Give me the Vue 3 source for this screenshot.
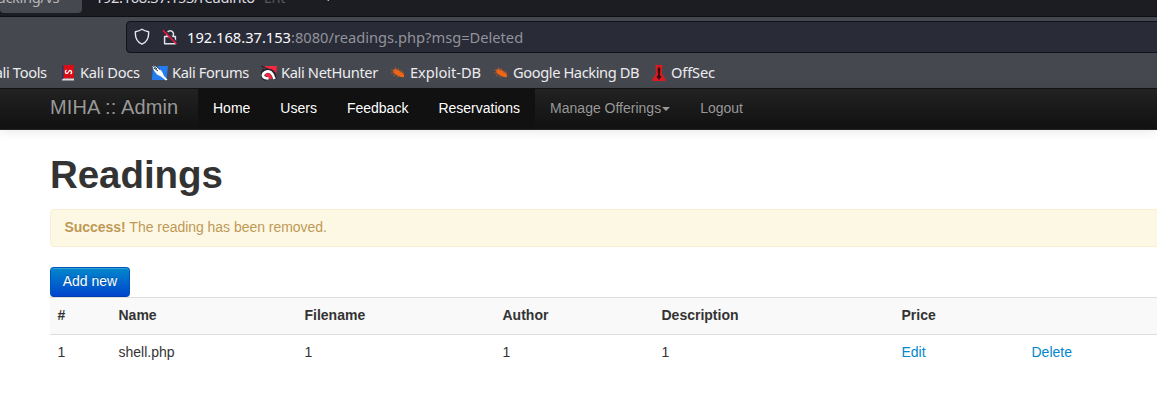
<script setup>
const navItems = [
  { label: 'Home', active: true },
  { label: 'Users', active: true },
  { label: 'Feedback', active: true },
  { label: 'Reservations', active: true },
  { label: 'Manage Offerings', caret: true },
  { label: 'Logout' },
]
</script>

<template>
  <div class="screen">
    <div class="tabs">
      <div class="tab current"><span>Hacking/vs</span></div>
      <div class="tab other"><span>192.168.37.153/readinto</span><span class="fade">Ent</span></div>
      <span class="plus">+</span>
    </div>
    <div class="toolbar">
      <div class="address">
        <svg class="shield" width="16" height="18" viewBox="0 0 16 18">
          <path d="M8 1.3 C6 2.7 3.8 3.4 1.4 3.8 C1 9.4 2.8 14 8 16.2 C13.2 14 15 9.4 14.6 3.8 C12.2 3.4 10 2.7 8 1.3Z" fill="none" stroke="#e8e8ee" stroke-width="1.4" stroke-linejoin="round" />
        </svg>
        <svg class="lock" width="16" height="18" viewBox="0 0 16 18">
          <path d="M5 8 V5 A3.4 3.4 0 0 1 11.4 5 V8 M2.6 8.5 H13.4 V15.8 H2.6Z" fill="none" stroke="#e1e1e7" stroke-width="1.5" stroke-linejoin="round" />
          <path d="M2.2 1.6 L15.2 14.8" stroke="#292b37" stroke-width="1.5" />
          <path d="M1 2.4 L14.5 16" stroke="#e8143c" stroke-width="1.5" />
        </svg>
        <span class="url"><b>192.168.37.153</b>:8080/readings.php?msg=Deleted</span>
      </div>
    </div>
    <div class="bookmarks">
      <div class="mark tools"><span>Kali Tools</span></div>
      <div class="mark docs">
        <svg width="16" height="16" viewBox="0 0 16 16">
          <path d="M2 1 L4 0 V13 L2 15Z" fill="#123c70" />
          <path d="M3.5 0 H14 V13.5 H3.5Z" fill="#d90d18" />
          <path d="M2 14.5 L3.5 13.5 H14 V15.5 H2Z" fill="#e2dada" />
          <path d="M6.6 5 Q4.6 6.2 5.8 8 Q7.4 9.2 8.4 7 Q9.4 4.6 11.2 6 Q12.3 7.7 10.6 9" fill="none" stroke="#fff" stroke-width="1.3" />
        </svg><span>Kali Docs</span>
      </div>
      <div class="mark forums">
        <svg width="16" height="16" viewBox="0 0 16 16">
          <path d="M1 1 H16 L14.5 15 H0Z" fill="#247df0" />
          <path d="M0 0 L6 2.5 L10 6.5 L12 11 L15.5 14.5 L14 15.5 L9 11.5 L5 9.5 L2 5.5Z" fill="#fff" />
          <path d="M0 0 L5 4 M2 3 L6 6 M4 1 L8 4.5" stroke="#222c39" stroke-width="1" />
        </svg><span>Kali Forums</span>
      </div>
      <div class="mark hunter">
        <svg width="16" height="16" viewBox="0 0 16 16">
          <path d="M4 1 H16 L14.5 14 H1Z" fill="#f52740" />
          <path d="M5.5 14 Q0 12 2 8 Q5 4.5 10 6.5 Q14 9 13 14" fill="none" stroke="#24242c" stroke-width="4.6" />
          <path d="M7.5 13.5 Q0 13 2.6 8.5 Q6 5 10 7.5 Q12.4 9.5 13.4 14" fill="none" stroke="#fff" stroke-width="2.7" />
          <path d="M0 1 L7 4 M1 4 L5 5" stroke="#24242c" stroke-width="1.2" />
          <path d="M5 10 L9 9 L10 12 H7Z" fill="#f52740" />
        </svg><span>Kali NetHunter</span>
      </div>
      <div v-for="(item, i) in ['Exploit-DB', 'Google Hacking DB']" :key="item" class="mark" :class="i ? 'google' : 'exploit'">
        <svg width="16" height="16" viewBox="0 0 16 16">
          <path d="M3 5 Q5 3 8 5 L12 7.5 Q14.5 9 14 12 Q11 12.6 8 11 L5 9 Q3 8 3 5Z" fill="#f16515" />
          <path d="M1 5 L5 6 M5 2 L7 6 M8 3 L9 6 M11 5 L10 8 M1 8 L5 8 M3 11 L7 9 M7 12.5 L8 10 M12 6 L14 8" stroke="#b5592f" stroke-width=".8" />
        </svg><span>{{ item }}</span>
      </div>
      <div class="mark offsec">
        <svg width="16" height="16" viewBox="0 0 16 16">
          <path d="M4.5 0 H11.5 L11 9 L14.5 14 V16 H1.5 V14 L5 9Z" fill="#df1820" />
          <path d="M8 1.5 L9.5 4 L8.8 10 L10.5 12 L9 13.5 L8 15 L7 13.5 L5.5 12 L7.2 10 L6.5 4Z" fill="#291316" />
        </svg><span>OffSec</span>
      </div>
    </div>
    <nav class="navbar">
      <a class="brand">MIHA :: Admin</a>
      <a v-for="item in navItems" :key="item.label" class="nav-link" :class="{ active: item.active }">{{ item.label }}<i v-if="item.caret" class="caret"></i></a>
    </nav>
    <main>
      <h1>Readings</h1>
      <div class="alert"><strong>Success!</strong> The reading has been removed.</div>
      <button>Add new</button>
      <table>
        <colgroup><col class="c1"><col class="c2"><col class="c3"><col class="c4"><col class="c5"><col class="c6"><col></colgroup>
        <thead><tr><th>#</th><th>Name</th><th>Filename</th><th>Author</th><th>Description</th><th>Price</th><th></th></tr></thead>
        <tbody><tr><td>1</td><td>shell.php</td><td>1</td><td>1</td><td>1</td><td><a>Edit</a></td><td><a>Delete</a></td></tr></tbody>
      </table>
    </main>
  </div>
</template>

<style>
body { margin: 0; background: #fff; overflow: hidden; }
</style>

<style scoped>
* { box-sizing: border-box; }
.screen { width: 1157px; height: 411px; overflow: hidden; background: #fff; color: #333; font: 14px/20px "Liberation Sans", Arial, sans-serif; }
.tabs, .bookmarks, .address { font-family: "Noto Sans", sans-serif; }
.tabs { display: flex; height: 17px; background: #1c1d22; border-bottom: 1px solid #0e0f14; color: #dcdce0; font-size: 14.67px; line-height: 20px; overflow: hidden; }
.tab { flex: none; white-space: nowrap; overflow: hidden; letter-spacing: -.35px; }
.tab span { display: block; margin-top: -13px; }
.current { width: 82px; height: 13px; background: #46484f; border-radius: 0 0 4px 4px; color: #b5b5ba; }
.current span { margin-left: -13px; }
.other { display: flex; width: 230px; padding-left: 13px; }
.tab .fade { margin-left: 9px; color: #56575c; }
.plus { margin: -13px 0 0 12px; }
.toolbar { height: 40px; padding: 4px 0 0 126px; background: #46484f; }
.address { display: flex; align-items: center; height: 32px; width: 1050px; padding-left: 7px; background: #292b37; border: 1px solid #111217; border-radius: 4px; }
.shield { margin-right: 12px; }
.lock { margin-right: 9px; }
.url { color: #92939b; font-size: 14.67px; line-height: 20px; white-space: nowrap; }
.url b { font-weight: 400; color: #fbfbfe; }
.bookmarks { display: flex; height: 31px; background: #46484f; color: #ececef; font-size: 14.67px; line-height: 20px; }
.mark { display: flex; flex: none; align-items: center; height: 31px; white-space: nowrap; letter-spacing: -.36px; }
.mark svg { margin-right: 4px; }
.mark span { margin-top: -2px; }
.tools { width: 60px; }
.tools span { margin-left: -14px; }
.docs { width: 92px; letter-spacing: -.28px; }
.forums { width: 109px; }
.hunter { width: 129px; }
.exploit { width: 103px; letter-spacing: -.05px; }
.google { width: 158px; letter-spacing: -.41px; }
.offsec { letter-spacing: -.15px; }
.navbar { display: flex; height: 42px; padding-left: 30px; background: linear-gradient(#222, #111); border-top: 1px solid #111; border-bottom: 1px solid #252525; box-shadow: 0 1px 10px rgba(0, 0, 0, .1); }
.brand { width: 168px; padding: 8px 20px; color: #999; font-size: 20px; line-height: 20px; letter-spacing: .12px; white-space: nowrap; text-shadow: 0 -1px 0 rgba(0, 0, 0, .25); }
.nav-link { height: 40px; padding: 9px 15px 11px; color: #999; text-shadow: 0 -1px 0 rgba(0, 0, 0, .25); white-space: nowrap; }
.active { background: #111; color: #fff; }
.caret { display: inline-block; margin: 9px 0 0 1px; vertical-align: top; border: 4px solid transparent; border-top-color: #999; border-bottom: 0; }
main { width: 1220px; padding: 25px 0 0 50px; }
h1 { margin: 0 0 14px; font-size: 38.5px; line-height: 40px; letter-spacing: -.05px; }
.alert { height: 38px; margin-bottom: 20px; padding: 7px 13.5px; letter-spacing: -.03px; background: #fcf8e3; border: 1px solid #fbeed5; border-radius: 4px; color: #c09853; text-shadow: 0 1px 0 rgba(255, 255, 255, .5); }
button { display: block; width: 80px; height: 30px; padding: 3px 11px 5px; color: #fff; font: 14px/20px "Liberation Sans", Arial, sans-serif; background: linear-gradient(#08c, #04c); border: 1px solid #0055bd; border-bottom-color: #003cab; border-radius: 4px; text-shadow: 0 -1px 0 rgba(0, 0, 0, .25); white-space: nowrap; box-shadow: inset 0 1px 0 rgba(255, 255, 255, .2), 0 1px 2px rgba(0, 0, 0, .05); }
table { width: 1170px; table-layout: fixed; border-spacing: 0; }
th, td { height: 37px; padding: 7px 7.5px 9px; border-top: 1px solid #ddd; text-align: left; vertical-align: top; }
th { background: #f9f9f9; }
td a { color: #08c; }
.c1 { width: 61px; } .c2 { width: 186px; } .c3 { width: 198px; } .c4 { width: 159px; } .c5 { width: 240px; } .c6 { width: 130px; }
</style>
